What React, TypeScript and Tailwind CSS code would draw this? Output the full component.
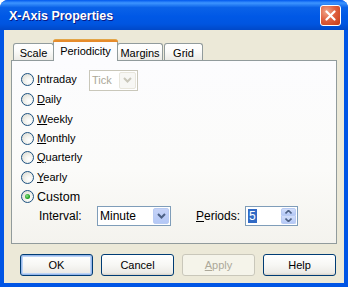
import React from "react";

const font = { fontFamily: '"Liberation Sans", Arial, sans-serif' };

function Radio({ label, ul, checked }: { label: string; ul?: number; checked?: boolean }) {
  return (
    <div className="flex items-center h-[19.4px]">
      <span className="relative w-[13px] h-[13px] rounded-full border border-[#1C5180] bg-[radial-gradient(circle_at_65%_65%,#ffffff_0%,#f4f4f0_35%,#d6d5cc_100%)] flex items-center justify-center">
        {checked && (
          <span className="w-[5px] h-[5px] rounded-full bg-[radial-gradient(circle_at_40%_40%,#8fe38f_0%,#21a121_60%,#177d17_100%)]" />
        )}
      </span>
      <span className="ml-[3px] text-[11px] text-black leading-none">
        {ul === undefined ? (
          label
        ) : (
          <>
            {label.slice(0, ul)}
            <span className="underline underline-offset-[1px]">{label[ul]}</span>
            {label.slice(ul + 1)}
          </>
        )}
      </span>
    </div>
  );
}

function DropArrow({ disabled }: { disabled?: boolean }) {
  return (
    <svg width="9" height="6" viewBox="0 0 9 6">
      <path
        d="M1 1 L4.5 4.5 L8 1"
        fill="none"
        stroke={disabled ? "#c9c7ba" : "#4d6185"}
        strokeWidth="2"
      />
    </svg>
  );
}

function Tab({ label, selected, w }: { label: string; selected?: boolean; w: string }) {
  if (selected) {
    return (
      <div
        className={`${w} relative z-10 -mb-px -mx-[1px] h-[21px] bg-[#fcfcfe] border-x border-[#919b9c] rounded-t-[3px] flex items-start justify-center`}
      >
        <div className="absolute -top-px -left-px -right-px h-[3px] rounded-t-[3px] bg-[#e68b2c] border-t border-[#e3a548]" />
        <span className="mt-[4px] text-[11px] text-black leading-[14px]">{label}</span>
      </div>
    );
  }
  return (
    <div
      className={`${w} h-[17px] mb-0 border border-b-0 border-[#919b9c] rounded-t-[3px] bg-[linear-gradient(to_bottom,#ffffff_0%,#fcfcfb_40%,#ecebe6_100%)] flex items-start justify-center`}
    >
      <span className="mt-[3px] text-[11px] text-black leading-[12px]">{label}</span>
    </div>
  );
}

function Button({ children, def, disabled }: { children: React.ReactNode; def?: boolean; disabled?: boolean }) {
  const base = "w-[73px] h-[22px] rounded-[3px] border flex items-center justify-center text-[11px]";
  if (disabled)
    return (
      <div className={`${base} border-[#c9c7ba] bg-[#f5f4ea] text-[#aca899]`}>{children}</div>
    );
  return (
    <div
      className={`${base} border-[#003c74] text-black bg-[linear-gradient(to_bottom,#ffffff_0%,#f7f7f4_50%,#ecebe6_90%,#d6d0c5_100%)] ${
        def ? "shadow-[inset_0_0_0_1px_#98b8ea,inset_0_0_0_2px_#bcd4f6]" : ""
      }`}
    >
      {children}
    </div>
  );
}

export default function App() {
  return (
    <div style={font} className="w-[348px] h-[287px] flex flex-col rounded-t-[8px] overflow-hidden bg-[#0055e5]">
      {/* title bar */}
      <div className="h-[30px] flex items-center px-[9px] bg-[linear-gradient(to_bottom,#0058ee_0%,#3d95ff_10%,#0a62e8_25%,#0058e6_55%,#0055e0_80%,#0048c8_100%)]">
        <span className="text-[12.5px] font-bold text-white mt-[2px] [text-shadow:1px_1px_0_#0a1883]">
          X-Axis Properties
        </span>
        <div className="ml-auto mr-[-2px] mt-[1px] w-[21px] h-[21px] rounded-[3px] border border-white bg-[radial-gradient(circle_at_30%_30%,#f0a58a_0%,#e06140_45%,#c53a14_100%)] flex items-center justify-center">
          <svg width="11" height="11" viewBox="0 0 11 11">
            <path d="M1.5 1.5 L9.5 9.5 M9.5 1.5 L1.5 9.5" stroke="white" strokeWidth="2.2" strokeLinecap="round" />
          </svg>
        </div>
      </div>

      {/* body */}
      <div className="flex-1 mx-[4px] mb-[4px] bg-[#ece9d8] px-[7px] pt-[10px] flex flex-col">
        {/* tabs */}
        <div className="flex items-end h-[20px] pl-[2px]">
          <Tab label="Scale" w="w-[41px]" />
          <Tab label="Periodicity" w="w-[65px]" selected />
          <Tab label="Margins" w="w-[46px]" />
          <div className="w-[1px]" />
          <Tab label="Grid" w="w-[39px]" />
        </div>

        {/* panel */}
        <div className="h-[184px] border border-[#919b9c] bg-[linear-gradient(to_bottom,#fcfcfe_0%,#fbfbf9_60%,#f4f3ee_100%)] pl-[9px] pt-[9px] flex flex-col">
          <div className="flex items-center h-[20px]">
            <div className="w-[68px]">
              <Radio label="Intraday" ul={0} />
            </div>
            <div className="w-[49px] h-[21px] border border-[#c9c7ba] bg-white flex items-center">
              <span className="flex-1 pl-[2px] text-[11px] text-[#aca899]">Tick</span>
              <div className="w-[17px] h-[17px] mr-[1px] rounded-[2px] bg-[#f7f7f4] border border-[#e8e6dc] flex items-center justify-center">
                <DropArrow disabled />
              </div>
            </div>
          </div>
          <Radio label="Daily" ul={0} />
          <Radio label="Weekly" ul={0} />
          <Radio label="Monthly" ul={0} />
          <Radio label="Quarterly" ul={0} />
          <Radio label="Yearly" ul={0} />
          <div className="flex items-center h-[20px]">
            <span className="w-[13px] h-[13px] rounded-full border border-[#1C5180] bg-[radial-gradient(circle_at_65%_65%,#ffffff_0%,#f4f4f0_35%,#d6d5cc_100%)] flex items-center justify-center">
              <span className="w-[5px] h-[5px] rounded-full bg-[radial-gradient(circle_at_40%_40%,#8fe38f_0%,#21a121_60%,#177d17_100%)]" />
            </span>
            <span className="ml-[3px] text-[12.5px] text-black leading-none">Custom</span>
          </div>
          <div className="flex items-center h-[20px] -mt-[1px]">
            <span className="ml-[18px] w-[58px] text-[12px] text-black">Interval:</span>
            <div className="w-[74px] h-[20px] border border-[#7f9db9] bg-white flex items-center">
              <span className="flex-1 pl-[2px] text-[12px] text-black">Minute</span>
              <div className="w-[16px] h-[16px] mr-[1px] rounded-[2px] bg-[linear-gradient(to_bottom,#c6d3f7_0%,#b4c8f6_100%)] border border-[#b9cbf3] flex items-center justify-center">
                <DropArrow />
              </div>
            </div>
            <span className="ml-[25px] w-[49px] text-[12px] text-black">
              <span className="underline underline-offset-[1px]">P</span>eriods:
            </span>
            <div className="w-[53px] h-[20px] border border-[#7f9db9] bg-white flex items-center">
              <span className="ml-[2px] px-[1px] bg-[#316ac5] text-white text-[12px] leading-[14px]">5</span>
              <div className="ml-auto mr-[1px] w-[15px] h-[16px] flex flex-col">
                <div className="flex-1 rounded-t-[2px] bg-[linear-gradient(to_bottom,#d2defa_0%,#b4c8f6_100%)] border border-[#b9cbf3] flex items-center justify-center">
                  <svg width="7" height="4" viewBox="0 0 7 4">
                    <path d="M0.5 3.5 L3.5 0.5 L6.5 3.5" fill="none" stroke="#4d6185" strokeWidth="1.6" />
                  </svg>
                </div>
                <div className="flex-1 rounded-b-[2px] bg-[linear-gradient(to_bottom,#d2defa_0%,#b4c8f6_100%)] border border-t-0 border-[#b9cbf3] flex items-center justify-center">
                  <svg width="7" height="4" viewBox="0 0 7 4">
                    <path d="M0.5 0.5 L3.5 3.5 L6.5 0.5" fill="none" stroke="#4d6185" strokeWidth="1.6" />
                  </svg>
                </div>
              </div>
            </div>
          </div>
        </div>

        {/* buttons */}
        <div className="flex gap-[8px] pl-[9px] mt-[10px]">
          <Button def>OK</Button>
          <Button>Cancel</Button>
          <Button disabled>
            <span className="underline underline-offset-[1px]">A</span>pply
          </Button>
          <Button>Help</Button>
        </div>
      </div>
    </div>
  );
}
